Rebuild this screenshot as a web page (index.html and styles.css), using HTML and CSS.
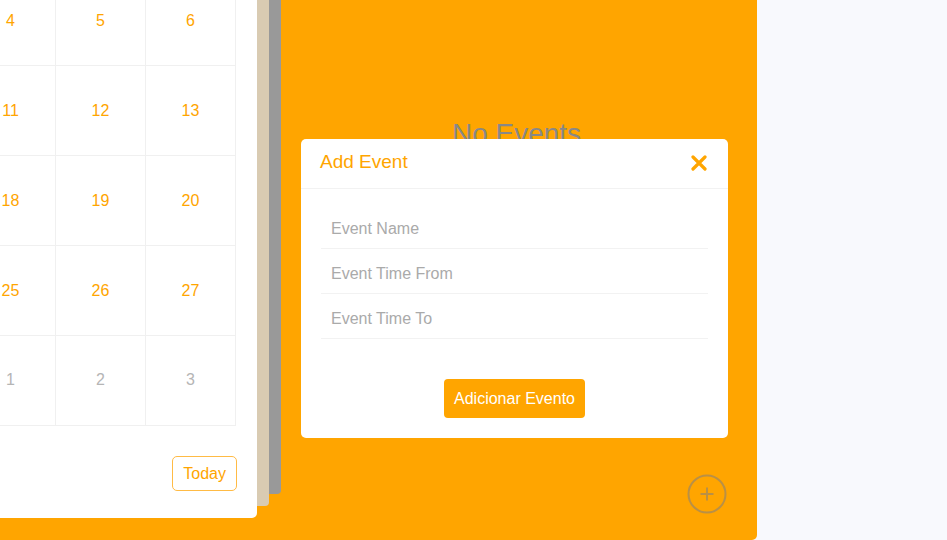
FILE: index.html
```html
<!DOCTYPE html>
<html lang="en">
<head>
<meta charset="utf-8">
<title>Calendar</title>
<link rel="stylesheet" href="styles.css">
</head>
<body>
<div class="page">
  <div class="calendar-wrap">
    <div class="card">
      <div class="grid">
        <div class="cell muted">30</div><div class="cell">1</div><div class="cell">2</div><div class="cell">3</div><div class="cell">4</div><div class="cell">5</div><div class="cell">6</div>
        <div class="cell">7</div><div class="cell">8</div><div class="cell">9</div><div class="cell">10</div><div class="cell">11</div><div class="cell">12</div><div class="cell">13</div>
        <div class="cell">14</div><div class="cell">15</div><div class="cell">16</div><div class="cell">17</div><div class="cell">18</div><div class="cell">19</div><div class="cell">20</div>
        <div class="cell">21</div><div class="cell">22</div><div class="cell">23</div><div class="cell">24</div><div class="cell">25</div><div class="cell">26</div><div class="cell">27</div>
        <div class="cell">28</div><div class="cell">29</div><div class="cell">30</div><div class="cell">31</div><div class="cell muted">1</div><div class="cell muted">2</div><div class="cell muted">3</div>
      </div>
      <div class="card-footer">
        <button class="today-btn">Today</button>
      </div>
    </div>
    <div class="sheet sheet-beige"></div>
    <div class="sheet sheet-grey"></div>
    <div class="events">
      <div class="no-events">No Events</div>
      <button class="add-btn" aria-label="Add event">
        <svg width="40" height="40" viewBox="0 0 40 40">
          <circle cx="20" cy="20" r="18.5" fill="none" stroke="rgba(128,128,128,0.55)" stroke-width="2"/>
          <path d="M20 13.5v13M13.5 20h13" stroke="rgba(128,128,128,0.55)" stroke-width="2" fill="none"/>
        </svg>
      </button>
    </div>
  </div>
</div>

<div class="modal">
  <div class="modal-header">
    <span class="modal-title">Add Event</span>
    <button class="close-btn" aria-label="Close">
      <svg width="16" height="16" viewBox="0 0 16 16">
        <path d="M2 2L14 14M14 2L2 14" stroke="#ffa500" stroke-width="3.2" stroke-linecap="round" fill="none"/>
      </svg>
    </button>
  </div>
  <div class="modal-body">
    <input class="field" type="text" placeholder="Event Name">
    <input class="field" type="text" placeholder="Event Time From">
    <input class="field" type="text" placeholder="Event Time To">
    <div class="modal-actions">
      <button class="submit-btn">Adicionar Evento</button>
    </div>
  </div>
</div>
</body>
</html>
```

FILE: styles.css
```css
* { box-sizing: border-box; }

html, body {
  margin: 0;
  padding: 0;
  height: 100%;
  overflow: hidden;
}

body {
  background: #f8f9fd;
  font-family: "Liberation Sans", Arial, sans-serif;
}

.page {
  display: flex;
  margin-left: -436px;
  margin-top: -65px;
}

.calendar-wrap {
  display: flex;
  width: 1193px;
  background: #ffa500;
  padding: 20px 0 22px 20px;
  border-radius: 5px;
}

.card {
  width: 673px;
  background: #fff;
  border-radius: 5px;
  padding: 20px 21px 27px 21px;
  flex-shrink: 0;
}

.grid {
  display: grid;
  grid-template-columns: repeat(7, 90px);
  border-top: 1px solid #f0f0f0;
  border-left: 1px solid #f0f0f0;
}

.cell {
  height: 90px;
  display: flex;
  align-items: center;
  justify-content: center;
  border-right: 1px solid #f0f0f0;
  border-bottom: 1px solid #f0f0f0;
  color: #ffa500;
  font-size: 16px;
}

.cell.muted {
  color: #b5b5b5;
  padding-bottom: 2px;
}

.card-footer {
  display: flex;
  justify-content: flex-end;
  margin-top: 30px;
}

.today-btn {
  height: 35px;
  padding: 0 10px;
  background: #fff;
  border: 1px solid #ffbb45;
  border-radius: 5px;
  color: #ffa500;
  font-family: inherit;
  font-size: 16px;
  margin-right: -1px;
}

.sheet {
  width: 12px;
  flex-shrink: 0;
  align-self: stretch;
  border-radius: 0 0 4px 0;
}

.sheet-beige {
  background: #d9cbb2;
  margin-bottom: 12px;
}

.sheet-grey {
  background: #999999;
  margin-bottom: 24px;
}

.events {
  flex: 1;
  display: flex;
  flex-direction: column;
  align-items: center;
  padding-top: 163px;
}

.no-events {
  font-size: 28px;
  color: #888;
  margin-left: -5px;
}

.add-btn {
  margin-top: auto;
  align-self: flex-end;
  margin-right: 30px;
  margin-bottom: 4px;
  width: 40px;
  height: 40px;
  padding: 0;
  border: 0;
  background: transparent;
  display: block;
}

.add-btn svg { display: block; }

.modal {
  position: fixed;
  left: 301px;
  top: 139px;
  width: 427px;
  background: #fff;
  border-radius: 5px;
}

.modal-header {
  height: 50px;
  display: flex;
  align-items: center;
  justify-content: space-between;
  padding: 0 21px 0 19px;
  border-bottom: 1px solid #f2f2f2;
}

.modal-title {
  color: #ffa500;
  font-size: 19px;
  margin-bottom: 3px;
}

.close-btn {
  padding: 0;
  border: 0;
  background: transparent;
  width: 16px;
  height: 16px;
  display: block;
  margin-bottom: 1px;
}

.close-btn svg { display: block; }

.modal-body {
  padding: 15px 20px 20px 20px;
  display: flex;
  flex-direction: column;
}

.field {
  height: 45px;
  border: 0;
  border-bottom: 1px solid #f2f2f2;
  padding: 5px 10px 0 10px;
  font-family: inherit;
  font-size: 16px;
  color: #555;
  outline: none;
  background: #fff;
}

.field::placeholder {
  color: #aaa;
}

.modal-actions {
  display: flex;
  justify-content: center;
  margin-top: 40px;
}

.submit-btn {
  height: 39px;
  padding: 0 10px;
  background: #ffa500;
  color: #fff;
  border: 0;
  border-radius: 4px;
  font-family: inherit;
  font-size: 16px;
}
```
